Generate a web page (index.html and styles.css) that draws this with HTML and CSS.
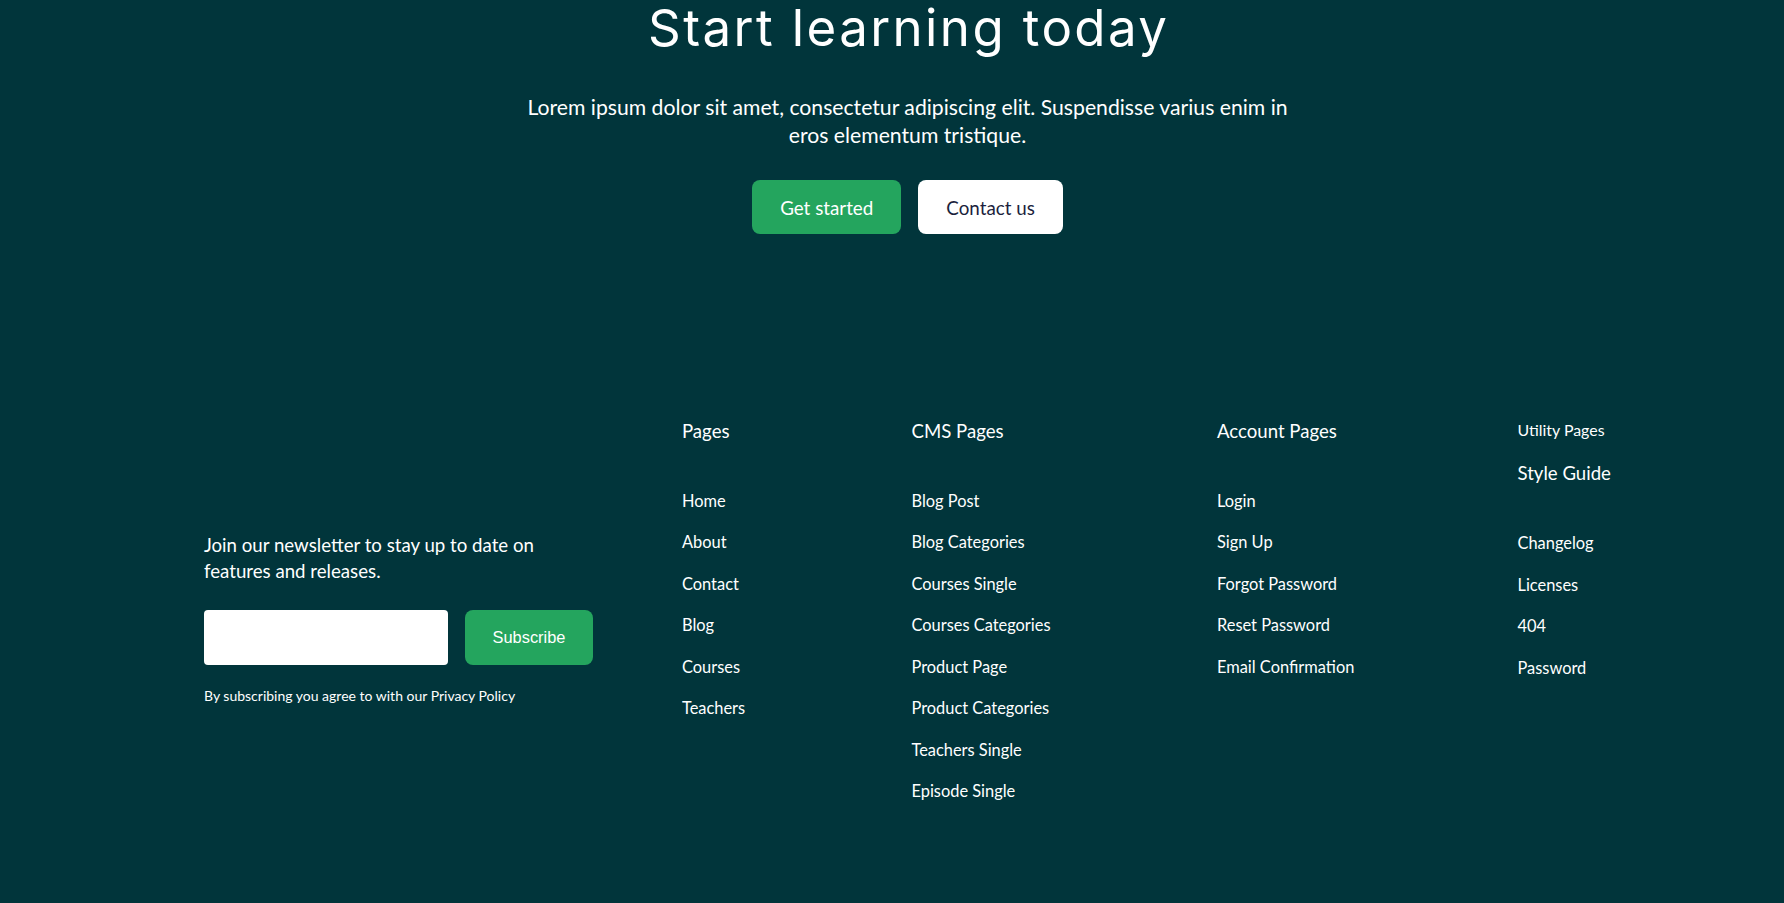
FILE: index.html
```html
<!DOCTYPE html>
<html lang="en">
<head>
<meta charset="utf-8">
<title>Start learning today</title>
<link rel="stylesheet" href="styles.css">
</head>
<body>
<div class="page">
  <section class="hero container">
    <h1 class="hero-title">Start learning today</h1>
    <p class="hero-text">Lorem ipsum dolor sit amet, consectetur adipiscing elit. Suspendisse varius enim in eros elementum tristique.</p>
    <div class="hero-actions">
      <a class="btn btn-primary" href="#">Get started</a>
      <a class="btn btn-light" href="#">Contact us</a>
    </div>
  </section>

  <footer class="footer container">
    <div class="newsletter">
      <p class="newsletter-text">Join our newsletter to stay up to date on features and releases.</p>
      <form class="newsletter-form">
        <input class="newsletter-input" type="email" aria-label="Email">
        <button class="newsletter-btn" type="button">Subscribe</button>
      </form>
      <p class="newsletter-note">By subscribing you agree to with our Privacy Policy</p>
    </div>

    <div class="footer-col">
      <div class="col-title">Pages</div>
      <ul class="col-links">
        <li><a href="#">Home</a></li>
        <li><a href="#">About</a></li>
        <li><a href="#">Contact</a></li>
        <li><a href="#">Blog</a></li>
        <li><a href="#">Courses</a></li>
        <li><a href="#">Teachers</a></li>
      </ul>
    </div>

    <div class="footer-col">
      <div class="col-title">CMS Pages</div>
      <ul class="col-links">
        <li><a href="#">Blog Post</a></li>
        <li><a href="#">Blog Categories</a></li>
        <li><a href="#">Courses Single</a></li>
        <li><a href="#">Courses Categories</a></li>
        <li><a href="#">Product Page</a></li>
        <li><a href="#">Product Categories</a></li>
        <li><a href="#">Teachers Single</a></li>
        <li><a href="#">Episode Single</a></li>
      </ul>
    </div>

    <div class="footer-col">
      <div class="col-title">Account Pages</div>
      <ul class="col-links">
        <li><a href="#">Login</a></li>
        <li><a href="#">Sign Up</a></li>
        <li><a href="#">Forgot Password</a></li>
        <li><a href="#">Reset Password</a></li>
        <li><a href="#">Email Confirmation</a></li>
      </ul>
    </div>

    <div class="footer-col">
      <div class="col-pre">Utility Pages</div>
      <div class="col-title">Style Guide</div>
      <ul class="col-links">
        <li><a href="#">Changelog</a></li>
        <li><a href="#">Licenses</a></li>
        <li><a href="#">404</a></li>
        <li><a href="#">Password</a></li>
      </ul>
    </div>
  </footer>
</div>
</body>
</html>
```
FILE: styles.css
```css
html {
  background: #01353b;
}

body {
  margin: 0;
  background: #01353b;
  color: #ffffff;
  font-family: "Lato", "Roboto", sans-serif;
}

.page {
  padding-left: 31px;
  min-height: 903px;
  box-sizing: border-box;
}

.container {
  max-width: 1407px;
  margin: 0 auto;
}

/* Hero */
.hero {
  text-align: center;
}

.hero-title {
  margin: -2px 0 0;
  padding-left: 2.4px;
  font-family: "Inter", "Lato", sans-serif;
  font-weight: 400;
  font-size: 51px;
  line-height: 60px;
  letter-spacing: 2.4px;
  color: #ffffff;
}

.hero-text {
  max-width: 768px;
  margin: 34.75px auto 0;
  font-size: 21.2px;
  line-height: 28.5px;
}

.hero-actions {
  display: flex;
  justify-content: center;
  gap: 17px;
  margin-top: 30.25px;
}

.btn {
  display: inline-flex;
  align-items: center;
  justify-content: center;
  height: 54px;
  padding: 0 28px;
  border-radius: 8px;
  font-size: 18.8px;
  text-decoration: none;
  box-sizing: border-box;
}

.btn-primary {
  background: #24a55e;
  color: #ffffff;
}

.btn-light {
  background: #ffffff;
  color: #1c1f3d;
}

/* Footer */
.footer {
  display: grid;
  grid-template-columns: 478px 229.5px 305.5px 300.5px auto;
  margin-top: 183.5px;
  padding-bottom: 80px;
}

.newsletter {
  padding-top: 114px;
}

.newsletter-text {
  max-width: 340px;
  margin: 0;
  font-size: 18.66px;
  line-height: 26.3px;
}

.newsletter-form {
  display: flex;
  gap: 17px;
  margin-top: 26.4px;
}

.newsletter-input {
  width: 244px;
  height: 55px;
  border: none;
  border-radius: 4px;
  background: #ffffff;
  box-sizing: border-box;
  padding: 0 12px;
}

.newsletter-btn {
  width: 128px;
  height: 55px;
  border: none;
  border-radius: 8px;
  background: #24a55e;
  color: #ffffff;
  font-family: "Liberation Sans", Arial, sans-serif;
  font-size: 16.4px;
  cursor: pointer;
}

.newsletter-note {
  margin: 20.8px 0 0;
  font-size: 14px;
  line-height: 20px;
}

.footer-col {
  display: flex;
  flex-direction: column;
}

.col-pre {
  font-size: 15.9px;
  line-height: 24px;
  margin-bottom: 18.6px;
}

.col-title {
  font-size: 18.6px;
  line-height: 26px;
  margin-bottom: 45.4px;
  white-space: nowrap;
}

.col-links {
  list-style: none;
  margin: 0;
  padding: 0;
  display: flex;
  flex-direction: column;
  gap: 17.5px;
}

.col-links li {
  font-size: 16.4px;
  line-height: 24px;
  white-space: nowrap;
}

.col-links a {
  color: #ffffff;
  text-decoration: none;
}
```
